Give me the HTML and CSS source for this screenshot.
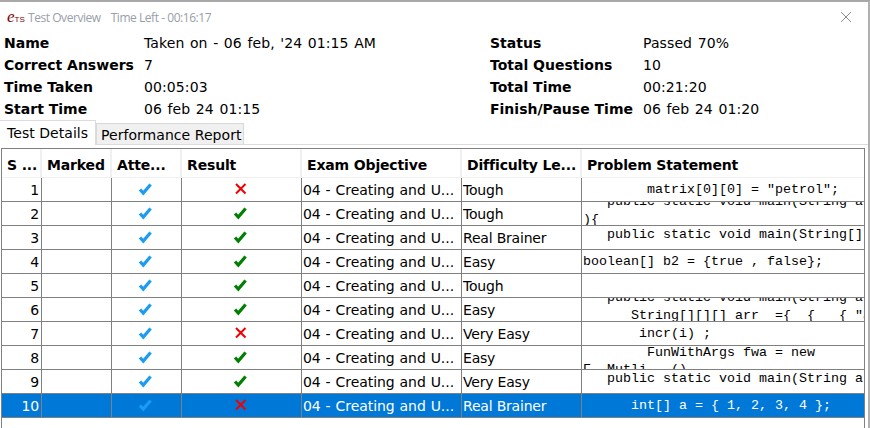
FILE: index.html
```html
<!DOCTYPE html>
<html lang="en">
<head>
  <meta charset="UTF-8">
  <title>Test Overview</title>
  <link rel="stylesheet" href="styles.css">
</head>
<body>
  <div class="window">
    <div class="title-bar">
      <span class="logo"><i>e</i><small>TS</small></span>
      <span class="title">Test Overview</span>
      <span class="title">Time Left - 00:16:17</span>
      <svg class="close" width="12" height="12" viewBox="0 0 12 12"><path d="M1 1l10 10M11 1L1 11" stroke="#8a8a8a" stroke-width="1" fill="none"/></svg>
    </div>

    <div class="summary">
      <b>Name</b><span>Taken on - 06 feb, '24 01:15 AM</span><b>Status</b><span>Passed 70%</span>
      <b>Correct Answers</b><span>7</span><b>Total Questions</b><span>10</span>
      <b>Time Taken</b><span>00:05:03</span><b>Total Time</b><span>00:21:20</span>
      <b>Start Time</b><span>06 feb 24 01:15</span><b>Finish/Pause Time</b><span>06 feb 24 01:20</span>
    </div>

    <div class="tabs">
      <div class="tab active">Test Details</div>
      <div class="tab">Performance Report</div>
    </div>

    <div class="panel">
      <div class="grid-wrap">
        <table class="grid">
          <colgroup>
            <col class="c-sno"><col class="c-marked"><col class="c-att"><col class="c-result"><col class="c-obj"><col class="c-diff"><col>
          </colgroup>
          <thead>
            <tr><th>S ...</th><th>Marked</th><th>Atte...</th><th>Result</th><th>Exam Objective</th><th>Difficulty Le...</th><th>Problem Statement</th></tr>
          </thead>
          <tbody>
            <tr>
              <td class="num">1</td><td></td>
              <td class="icon"><svg width="16" height="16"><use href="#tick" class="blue"/></svg></td>
              <td class="icon"><svg width="16" height="16"><use href="#cross"/></svg></td>
              <td class="obj">04 - Creating and U...</td><td>Tough</td>
              <td><div class="code">        matrix[0][0] = "petrol";</div></td>
            </tr>
            <tr>
              <td class="num">2</td><td></td>
              <td class="icon"><svg width="16" height="16"><use href="#tick" class="blue"/></svg></td>
              <td class="icon"><svg width="16" height="16"><use href="#tick" class="green"/></svg></td>
              <td class="obj">04 - Creating and U...</td><td>Tough</td>
              <td><div class="code two-up"><div>   public static void main(String a</div><div>){</div></div></td>
            </tr>
            <tr>
              <td class="num">3</td><td></td>
              <td class="icon"><svg width="16" height="16"><use href="#tick" class="blue"/></svg></td>
              <td class="icon"><svg width="16" height="16"><use href="#tick" class="green"/></svg></td>
              <td class="obj">04 - Creating and U...</td><td>Real Brainer</td>
              <td><div class="code up">   public static void main(String[] args)</div></td>
            </tr>
            <tr>
              <td class="num">4</td><td></td>
              <td class="icon"><svg width="16" height="16"><use href="#tick" class="blue"/></svg></td>
              <td class="icon"><svg width="16" height="16"><use href="#tick" class="green"/></svg></td>
              <td class="obj">04 - Creating and U...</td><td>Easy</td>
              <td><div class="code">boolean[] b2 = {true , false};</div></td>
            </tr>
            <tr>
              <td class="num">5</td><td></td>
              <td class="icon"><svg width="16" height="16"><use href="#tick" class="blue"/></svg></td>
              <td class="icon"><svg width="16" height="16"><use href="#tick" class="green"/></svg></td>
              <td class="obj">04 - Creating and U...</td><td>Tough</td>
              <td><div class="code"></div></td>
            </tr>
            <tr>
              <td class="num">6</td><td></td>
              <td class="icon"><svg width="16" height="16"><use href="#tick" class="blue"/></svg></td>
              <td class="icon"><svg width="16" height="16"><use href="#tick" class="green"/></svg></td>
              <td class="obj">04 - Creating and U...</td><td>Easy</td>
              <td><div class="code two-up"><div>   public static void main(String a</div><div>      String[][][] arr  ={  {   { "a"</div></div></td>
            </tr>
            <tr>
              <td class="num">7</td><td></td>
              <td class="icon"><svg width="16" height="16"><use href="#tick" class="blue"/></svg></td>
              <td class="icon"><svg width="16" height="16"><use href="#cross"/></svg></td>
              <td class="obj">04 - Creating and U...</td><td>Very Easy</td>
              <td><div class="code">       incr(i) ;</div></td>
            </tr>
            <tr>
              <td class="num">8</td><td></td>
              <td class="icon"><svg width="16" height="16"><use href="#tick" class="blue"/></svg></td>
              <td class="icon"><svg width="16" height="16"><use href="#tick" class="green"/></svg></td>
              <td class="obj">04 - Creating and U...</td><td>Easy</td>
              <td><div class="code two-down"><div>        FunWithArgs fwa = new</div><div>F  Mutli   ()</div></div></td>
            </tr>
            <tr>
              <td class="num">9</td><td></td>
              <td class="icon"><svg width="16" height="16"><use href="#tick" class="blue"/></svg></td>
              <td class="icon"><svg width="16" height="16"><use href="#tick" class="green"/></svg></td>
              <td class="obj">04 - Creating and U...</td><td>Very Easy</td>
              <td><div class="code up">   public static void main(String args[])</div></td>
            </tr>
            <tr class="selected">
              <td class="num">10</td><td></td>
              <td class="icon"><svg width="16" height="16"><use href="#tick" class="blue"/></svg></td>
              <td class="icon"><svg width="16" height="16"><use href="#cross"/></svg></td>
              <td class="obj">04 - Creating and U...</td><td>Real Brainer</td>
              <td><div class="code">      int[] a = { 1, 2, 3, 4 };</div></td>
            </tr>
          </tbody>
        </table>
      </div>
    </div>
  </div>

  <svg class="defs" width="0" height="0">
    <symbol id="tick" viewBox="0 0 16 16"><path d="M2 7.5l3.3 3.6L12.6 2.5" fill="none" stroke="currentColor" stroke-width="3.2"/></symbol>
    <symbol id="cross" viewBox="0 0 16 16"><path d="M3 2l9.5 9.5M12.5 2L3 11.5" fill="none" stroke="#f00000" stroke-width="2"/></symbol>
  </svg>
</body>
</html>
```

FILE: styles.css
```css
html, body {
  margin: 0;
  padding: 0;
  height: 100%;
  overflow: hidden;
}

body {
  font-family: "DejaVu Sans", sans-serif;
  font-size: 14px;
  color: #000;
  background: #fff;
}

.window {
  height: 428px;
  display: flex;
  flex-direction: column;
  box-sizing: border-box;
  border-top: 2px solid #a8a8a8;
  border-right: 2px solid #b0b0b0;
}

.title-bar {
  height: 30px;
  flex: none;
  display: flex;
  align-items: center;
  gap: 10px;
  padding: 0 16px 0 7px;
  font-family: "Open Sans", sans-serif;
  font-size: 12px;
  letter-spacing: -0.45px;
  color: #97a0aa;
}

.logo {
  width: 16px;
  margin-right: -5px;
  font-family: "Liberation Serif", serif;
  color: #800000;
  white-space: nowrap;
  letter-spacing: 0;
}

.logo i {
  font-size: 17px;
}

.logo small {
  font-family: "Liberation Sans", sans-serif;
  font-size: 8px;
}

.close {
  margin-left: auto;
}

.defs {
  position: absolute;
}

.summary {
  flex: none;
  display: grid;
  grid-template-columns: 140px 346px 153px 1fr;
  grid-auto-rows: 22px;
  align-items: center;
  padding-left: 4px;
  letter-spacing: 0.1px;
  word-spacing: 1px;
}

.summary b {
  letter-spacing: 0;
  word-spacing: 0;
}

.tabs {
  flex: none;
  height: 25px;
  display: flex;
  align-items: flex-end;
  box-sizing: border-box;
  border-bottom: 1px solid #dcdcdc;
}

.tab {
  height: 21px;
  width: 148px;
  line-height: 22px;
  padding-left: 4px;
  box-sizing: border-box;
  background: #f0f0f0;
  border: 1px solid #d9d9d9;
  border-bottom: 0;
  white-space: nowrap;
  letter-spacing: 0.05px;
}

.tab.active {
  height: 25px;
  width: 96px;
  padding-left: 7px;
  line-height: 24px;
  background: #fff;
  margin-bottom: -1px;
  border-left: 0;
  border-color: #dcdcdc;
}

.panel {
  flex: 1;
  min-height: 0;
  padding: 3px 3px 0 1px;
}

.grid-wrap {
  height: 100%;
  box-sizing: border-box;
  border: 1px solid #808080;
  border-bottom: 0;
}

.grid {
  width: 100%;
  table-layout: fixed;
  border-collapse: separate;
  border-spacing: 0;
}

.c-sno { width: 40px; }
.c-marked { width: 70px; }
.c-att { width: 70px; }
.c-result { width: 120px; }
.c-obj { width: 160px; }
.c-diff { width: 120px; }

.grid th {
  height: 29px;
  padding: 3px 0 0 5px;
  box-sizing: border-box;
  text-align: left;
  font-weight: bold;
  letter-spacing: -0.15px;
  white-space: nowrap;
  overflow: hidden;
  border-right: 2px solid #f0f0f0;
  border-bottom: 1px solid #f0f0f0;
}

.grid th:last-child {
  border-right: 0;
}

.grid td {
  height: 24px;
  padding: 0 0 0 1px;
  box-sizing: border-box;
  border-right: 1px solid #808080;
  border-bottom: 1px solid #808080;
  white-space: nowrap;
  overflow: hidden;
  letter-spacing: -0.2px;
}

.grid td.obj {
  letter-spacing: -0.05px;
  word-spacing: 0.5px;
}

.grid td:last-child {
  border-right: 0;
  padding-left: 1px;
}

.grid td.num {
  text-align: right;
  padding: 0 2px 0 0;
}

.grid td.icon {
  text-align: center;
  padding: 0 2px 0 0;
  line-height: 0;
}

.code {
  height: 23px;
  overflow: hidden;
  font-family: "Liberation Mono", monospace;
  font-size: 13.33px;
  line-height: 24px;
  letter-spacing: 0;
  white-space: pre;
}

.code.up {
  line-height: 17px;
}

.two-up {
  line-height: 18px;
}

.two-up > div:first-child {
  margin-top: -9px;
}

.two-down {
  line-height: 17px;
}

.two-down > div:first-child {
  margin-top: -2px;
}

.blue { color: #1a9bf5; }
.green { color: #008000; }

.selected td {
  background: #0078d7;
  color: #fff;
}
```
